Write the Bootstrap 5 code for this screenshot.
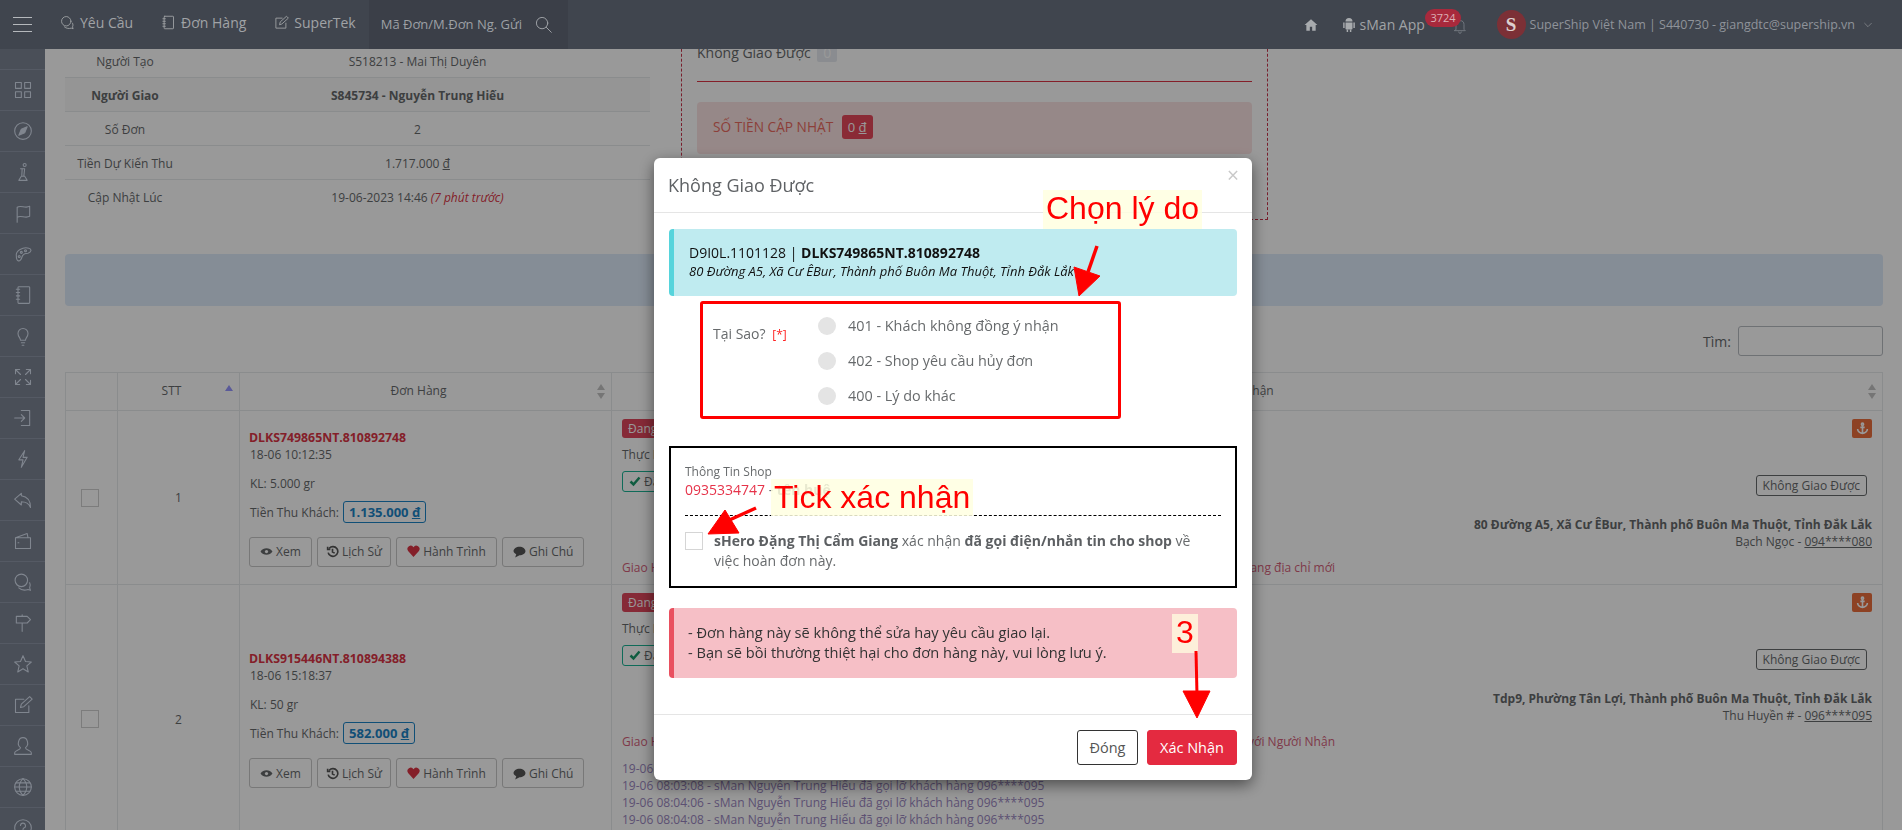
<!DOCTYPE html>
<html lang="vi">
  <head>
    <meta charset="UTF-8" />
    <meta name="viewport" content="width=device-width, initial-scale=1.0" />
    <title>Không Giao Được</title>
    <link href="https://cdn.jsdelivr.net/npm/bootstrap@5.3.0/dist/css/bootstrap.min.css" rel="stylesheet" />
    <style>
      html, body { height: 830px; overflow: hidden; }
      body { font-family: "Open Sans", sans-serif; font-size: 12px; line-height: 17px; color: #676a6c; background: #fff; }

      /* top bar */
      .top-bar { position: relative; z-index: 1060; height: 49px; background: #40454e; color: #a0a3a6; font-size: 14px; }
      .top-bar svg { fill: none; stroke: currentColor; stroke-width: 1.4; stroke-linecap: round; stroke-linejoin: round; }
      .burger { width: 19px; margin: 0 28px 0 13px; }
      .burger i { display: block; height: 1px; background: #b5b8bc; margin: 6px 0; }
      .top-link { display: flex; align-items: center; gap: 5px; margin-right: 28px; margin-top: -5px; }
      .top-search { width: 199px; height: 49px; background: #3b3f48; margin-left: -15px; padding: 0 16px 0 12px; color: #9da0a5; font-size: 13px; }
      .user-text { font-size: 12.5px; color: #8f939a; }
      .note-badge { position: absolute; left: 1425px; top: 9px; width: 36px; height: 18px; line-height: 18px; border-radius: 9px; background: #a8293c; color: #dcb0b6; font-size: 11px; text-align: center; }
      .ava { width: 29px; height: 29px; border-radius: 50%; background: #7c3036; color: #ddd0d0; font-family: "Liberation Serif", serif; font-size: 19px; font-weight: bold; }

      /* left rail */
      .side-rail { position: fixed; z-index: 1060; left: 0; top: 49px; bottom: 0; width: 45px; background: #4a4f58; padding-top: 20px; color: #80868f; }
      .side-item { height: 41px; border-top: 1px solid #555a64; }
      .side-item svg { width: 20px; height: 20px; fill: none; stroke: currentColor; stroke-width: 1.3; stroke-linecap: round; stroke-linejoin: round; }

      /* content behind the dialog */
      .main-wrap { margin: -15px 19px 0 65px; }
      .info-table { width: 585px; margin-top: 10px; }
      .info-table td { padding: 9px 8px 7px; text-align: center; border-bottom: 1px solid #e7eaec; line-height: 17px; }
      .info-table td:first-child { width: 120px; }
      .info-table tr.strong td { font-weight: 700; background: #f9f9f9; }
      .ago { color: #dc3545; font-style: italic; }
      .dash-box { width: 587px; height: 186px; margin-left: 31px; border: 1px dashed #c8324a; border-top: 0; padding: 9px 15px 0 15px; font-size: 14px; line-height: 20px; }
      .zero-tag { display: inline-block; background: #e6eaf0; color: #fff; padding: 0 6px; border-radius: 2px; font-size: 14px; line-height: 18px; margin-left: 3px; }
      .red-line { height: 1px; background: #dc3545; margin-top: 18px; margin-bottom: 20px; }
      .pink-box { height: 52px; background: #fbe3e3; border-radius: 4px; padding: 16px 16px; color: #ea6a60; font-size: 13.7px; line-height: 17px; }
      .money-tag { background: #e6485a; color: #fff; border-radius: 3px; padding: 3px 6px; font-size: 13px; margin-left: 5px; }
      .blue-strip { height: 52px; margin-top: 34px; background: #deebfa; border-radius: 4px; }
      .find-row { margin-top: 20px; height: 30px; font-size: 14px; }
      .find-box { width: 145px; height: 30px; border: 1px solid #b8bcc2; border-radius: 3px; margin-left: 7px; }

      .order-table { table-layout: fixed; width: 1818px; margin: 16px 0 0; --bs-table-bg: transparent; --bs-table-color: #676a6c; --bs-border-color: #e7eaec; }
      .order-table th { position: relative; height: 38px; padding: 0 14px 2px 0; text-align: center; vertical-align: middle; font-weight: 400; }
      .order-table td { padding: 8px 10px; vertical-align: middle; }
      .sort-mark { position: absolute; right: 6px; top: 11px; width: 8px; height: 15px; }
      .tick-box { width: 18px; height: 18px; border: 1px solid #cfcfcf; display: block; margin: 0 auto 0 5px; }
      .code-link { color: #dc3545; font-weight: 700; font-size: 12.3px; margin-left: -1px; }
      .cod-tag { border: 1px solid #1c84c6; border-radius: 3px; padding: 1px 5px; color: #1c84c6; font-weight: 700; font-size: 13px; margin-left: 1px; }
      .act-btn { --bs-btn-padding-x: 10px; --bs-btn-padding-y: 0; --bs-btn-font-size: 12px; --bs-btn-color: #676a6c; --bs-btn-border-color: #c8c8c8; --bs-btn-border-radius: 3px; height: 30px; line-height: 27px; margin-right: 5px; white-space: nowrap; }
      .act-btn.act-short { --bs-btn-padding-x: 8px; }
      .act-btn svg { width: 13px; height: 13px; vertical-align: -2px; }
      .act-row { margin-left: -1px; }
      .state-tag { display: inline-block; height: 19px; padding: 0 6px; line-height: 19px; background: #e0465c; color: #fff; border-radius: 3px; }
      .ok-tag { display: inline-block; height: 21px; padding: 0 6px; line-height: 19px; border: 1px solid #1ab394; border-radius: 3px; }
      .ok-tag svg { vertical-align: -1px; }
      .anchor-tag { display: inline-flex; align-items: center; justify-content: center; width: 20px; height: 19px; background: #ec6f3c; border-radius: 2px; }
      .fail-tag { display: inline-block; height: 21px; padding: 0 6px; line-height: 19px; border: 1px solid #676a6c; border-radius: 3px; margin-right: 5px; }
      .rose-text { color: #d4607a; }
      .log-text { color: #9a86c0; margin-top: 10px; }

      /* dialog */
      .modal-backdrop.show { opacity: .4; }
      .modal { --bs-modal-width: 598px; }
      .modal-dialog.fail-dialog { margin: 158px 0 0 654px; }
      .fail-dialog .modal-content { height: 622px; color: #676a6c; border: 0; border-radius: 6px; box-shadow: 0 5px 15px rgba(0,0,0,.5); font-size: 14px; line-height: 20px; }
      .fail-dialog .modal-header { height: 55px; padding: 0 14px; border-bottom: 1px solid #e5e5e5; }
      .fail-dialog .modal-title { font-size: 18px; line-height: 25px; font-weight: 400; color: #5f6265; }
      .close-x { position: absolute; right: 13px; top: 7px; color: #c9c9c9; font-size: 21px; }
      .fail-dialog .modal-body { padding: 16px 15px 0; }
      .note-info { height: 67px; background: #bfebf0; border-left: 5px solid #56d4dc; border-radius: 4px; padding: 15px 15px; color: #111; font-size: 13px; line-height: 18px; }
      .note-info .first-line { font-size: 14px; }
      .why-box { width: 421px; height: 118px; margin: 5px 0 0 31px; border: 3px solid #f00; border-radius: 3px; padding: 0 10px; font-size: 14px; }
      .why-label { width: 105px; padding-top: 20px; }
      .req-mark { color: #f22; font-size: 12px; margin-left: 3px; }
      .why-opts { padding-top: 4px; font-size: 14.4px; }
      .why-opts .form-check { display: flex; align-items: center; height: 35px; padding: 0; margin: 0; gap: 12px; }
      .why-opts .form-check-input { width: 18px; height: 18px; margin: 0; float: none; background-color: #e4e4e4; border: 0; }
      .shop-box { height: 142px; margin-top: 27px; border: 2px solid #000; padding: 15px 14px 0; }
      .shop-title { font-size: 12px; line-height: 18px; }
      .shop-phone { font-size: 14px; color: #e6334a; line-height: 18px; }
      .dash-line { border-top: 1px dashed #000; margin: 16px 0 0; }
      .confirm-row { display: flex; gap: 11px; margin-top: 16px; font-size: 14px; line-height: 20px; }
      .confirm-row label { max-width: 490px; margin-top: -1px; }
      .confirm-row .form-check-input { flex: 0 0 18px; width: 18px; height: 18px; margin: 0; border-radius: 0; border-color: #d5d5d5; }
      .confirm-row b { color: #5c5f62; }
      .note-red { height: 70px; margin-top: 20px; background: #f6bfc6; border-left: 5px solid #e9505f; border-radius: 4px; padding: 14px 14px; color: #333; font-size: 14.6px; line-height: 20px; }
      .fail-dialog .modal-footer { position: absolute; left: 0; right: 0; top: 556px; height: 66px; padding: 0 15px; border-top: 1px solid #e5e5e5; gap: 9px; }
      .fail-dialog .modal-footer .btn { height: 35px; margin: 0; padding: 0; font-size: 14.5px; border-radius: 3px; }
      .btn-shut { width: 61px; --bs-btn-color: #555; --bs-btn-border-color: #333; --bs-btn-bg: #fff; }
      .btn-ok { width: 90px; --bs-btn-color: #fff; --bs-btn-bg: #e42a40; --bs-btn-border-color: #e42a40; }

      /* tutorial marks drawn over the capture */
      .hint-text { position: absolute; z-index: 1070; height: 39px; padding: 0 3px; background: rgba(255,255,224,.85); color: #f00; font-family: "Liberation Sans", sans-serif; font-size: 32px; line-height: 36px; white-space: nowrap; }
      .hint-one { left: 1043px; top: 190px; }
      .hint-two { left: 771px; top: 479px; height: 37px; }
      .hint-three { left: 1172px; top: 614px; background: rgba(255,255,224,.75); padding: 0 4px; }
      .hint-arrows { position: fixed; z-index: 1070; left: 0; top: 0; width: 1902px; height: 830px; pointer-events: none; }
    </style>
  </head>
  <body class="modal-open">
    <header class="top-bar d-flex align-items-center">
      <div class="burger"><i></i><i></i><i></i></div>
      <div class="top-link">
        <svg width="15" height="15" viewBox="0 0 24 24"><circle cx="10" cy="10" r="7.5" /><path d="M7 19c3 3 8 3 11 2l3 1-1-3c1-2 1-4 0-6" /></svg>Yêu Cầu
      </div>
      <div class="top-link">
        <svg width="15" height="15" viewBox="0 0 24 24"><rect x="5" y="2" width="15" height="20" rx="1" /><path d="M3 6h4M3 10h4M3 14h4M3 18h4" /></svg>Đơn Hàng
      </div>
      <div class="top-link">
        <svg width="15" height="15" viewBox="0 0 24 24"><path d="M19 13v8H3V5h10" /><path d="M9 15l1-4L20 2l3 3-10 9z" /></svg>SuperTek
      </div>
      <div class="top-search d-flex align-items-center justify-content-between">
        <span>Mã Đơn/M.Đơn Ng. Gửi</span>
        <svg width="17" height="17" viewBox="0 0 24 24"><circle cx="10" cy="10" r="8" /><path d="M16 16l7 7" /></svg>
      </div>
      <div class="ms-auto d-flex align-items-center">
        <svg width="14" height="14" viewBox="0 0 24 24" style="fill:#a8abae;stroke:none"><path d="M12 2L1 12h3v10h6v-7h4v7h6V12h3z" /></svg>
        <svg class="ms-4" width="14" height="17" viewBox="0 0 24 28" style="fill:#a8abae;stroke:none"><path d="M6 9a6 6 0 0112 0zM6 10.500h12V21a1.500 1.500 0 01-1.500 1.500h-9A1.500 1.500 0 016 21zM2 10.500h2.500V20H2zM19.500 10.500H22V20h-2.500zM8 23h2.500v4H8zM13.500 23H16v4h-2.500z" /></svg>
        <span class="ms-1" style="width:92px">sMan App</span>
        <span class="note-badge">3724</span>
        <svg width="16" height="18" viewBox="0 0 24 24" style="margin-top:3px;color:#747a81"><path d="M6 17V10a6 6 0 0112 0v7l2 2H4zM10 21a2 2 0 004 0" /></svg>
        <span class="ava d-flex align-items-center justify-content-center" style="margin-left:29px">S</span>
        <span class="user-text" style="margin-left:4px">SuperShip Việt Nam | S440730 - giangdtc@supership.vn</span>
        <svg class="ms-2" width="10" height="10" viewBox="0 0 24 24" style="margin-right:29px"><path d="M4 8l8 8 8-8" /></svg>
      </div>
    </header>

    <nav class="side-rail">
      <div class="side-item d-flex align-items-center justify-content-center"><svg viewBox="0 0 24 24"><rect x="3" y="3" width="7" height="7" /><rect x="14" y="3" width="7" height="7" /><rect x="3" y="14" width="7" height="7" /><rect x="14" y="14" width="7" height="7" /></svg></div>
      <div class="side-item d-flex align-items-center justify-content-center"><svg viewBox="0 0 24 24"><circle cx="12" cy="12" r="10" /><path d="M17 7l-3 7-7 3 3-7z" fill="currentColor" /></svg></div>
      <div class="side-item d-flex align-items-center justify-content-center"><svg viewBox="0 0 24 24"><circle cx="14" cy="3.500" r="1.800" /><path d="M9 8h5l-1 9M11 8l-.500 9M7 22l3-5h4l3 5z" /></svg></div>
      <div class="side-item d-flex align-items-center justify-content-center"><svg viewBox="0 0 24 24"><path d="M5 23V5c5-3 9 2 15-1v12c-6 3-10-2-15 1" /></svg></div>
      <div class="side-item d-flex align-items-center justify-content-center"><svg viewBox="0 0 24 24"><path d="M4 14c-1-6 8-11 15-9 4 1 3 5-1 6-4 0-6 1-7 4-1 4-3 6-5 5s-2-3-2-6z" /><circle cx="10" cy="10" r="1.200" /><circle cx="15" cy="8" r="1.200" /><circle cx="7.500" cy="15" r="1.200" /></svg></div>
      <div class="side-item d-flex align-items-center justify-content-center"><svg viewBox="0 0 24 24"><rect x="6" y="2" width="14" height="20" rx="1" /><path d="M4 5h4M4 9h4M4 13h4M4 17h4" /></svg></div>
      <div class="side-item d-flex align-items-center justify-content-center"><svg viewBox="0 0 24 24"><path d="M9 17c0-3-3-4-3-8a6 6 0 0112 0c0 4-3 5-3 8zM10 20h4M11 23h2" /></svg></div>
      <div class="side-item d-flex align-items-center justify-content-center"><svg viewBox="0 0 24 24"><path d="M3 8V3h5M3 3l6 6M21 8V3h-5M21 3l-6 6M3 16v5h5M3 21l6-6M21 16v5h-5M21 21l-6-6" /></svg></div>
      <div class="side-item d-flex align-items-center justify-content-center"><svg viewBox="0 0 24 24"><path d="M10 3h10v18H10M2 12h12M10 8l4 4-4 4" /></svg></div>
      <div class="side-item d-flex align-items-center justify-content-center"><svg viewBox="0 0 24 24"><path d="M14 2L7 13h5l-2 9 7-12h-5z" /></svg></div>
      <div class="side-item d-flex align-items-center justify-content-center"><svg viewBox="0 0 24 24"><path d="M10 4l-8 7 8 7v-4c5 0 9 2 11 7 0-8-4-13-11-14z" /></svg></div>
      <div class="side-item d-flex align-items-center justify-content-center"><svg viewBox="0 0 24 24"><path d="M3 8l14-5 1 5M3 8h18v13H3zM6 14h1" /></svg></div>
      <div class="side-item d-flex align-items-center justify-content-center"><svg viewBox="0 0 24 24"><circle cx="10" cy="10" r="7.5" /><path d="M7 19c3 3 8 3 11 2l3 1-1-3c1-2 1-4 0-6" /></svg></div>
      <div class="side-item d-flex align-items-center justify-content-center"><svg viewBox="0 0 24 24"><path d="M4 4h13l4 4-4 4H4zM11 12v10M11 2v2" /></svg></div>
      <div class="side-item d-flex align-items-center justify-content-center"><svg viewBox="0 0 24 24"><path d="M12 2l3 7 7 .6-5.400 4.700 1.700 7.200L12 17.600 5.700 21.500l1.700-7.200L2 9.600 9 9z" /></svg></div>
      <div class="side-item d-flex align-items-center justify-content-center"><svg viewBox="0 0 24 24"><path d="M19 13v8H3V5h10" /><path d="M9 15l1-4L20 2l3 3-10 9z" /></svg></div>
      <div class="side-item d-flex align-items-center justify-content-center"><svg viewBox="0 0 24 24"><path d="M12 2a5.500 6.500 0 00-3 12c0 3-7 3-7 6v2h20v-2c0-3-7-3-7-6a5.500 6.500 0 00-3-12z" /></svg></div>
      <div class="side-item d-flex align-items-center justify-content-center"><svg viewBox="0 0 24 24"><circle cx="12" cy="12" r="10" /><path d="M2 12h20M3.500 7h17M3.500 17h17M12 2c-6 6-6 14 0 20M12 2c6 6 6 14 0 20" /></svg></div>
      <div class="side-item d-flex align-items-center justify-content-center"><svg viewBox="0 0 24 24"><circle cx="12" cy="12" r="10" /><path d="M9 9a3 3 0 114 3c-1 .5-1 1-1 2M12 17v1" /></svg></div>
    </nav>

    <main class="main-wrap">
      <div class="d-flex align-items-start">
        <table class="info-table">
          <tr><td>Người Tạo</td><td>S518213 - Mai Thị Duyên</td></tr>
          <tr class="strong"><td>Người Giao</td><td>S845734 - Nguyễn Trung Hiếu</td></tr>
          <tr><td>Số Đơn</td><td>2</td></tr>
          <tr><td>Tiền Dự Kiến Thu</td><td>1.717.000 <u>đ</u></td></tr>
          <tr><td class="border-0">Cập Nhật Lúc</td><td class="border-0">19-06-2023 14:46 <span class="ago">(7 phút trước)</span></td></tr>
        </table>
        <div class="dash-box">
          <div>Không Giao Được <span class="zero-tag">0</span></div>
          <div class="red-line"></div>
          <div class="pink-box">SỐ TIỀN CẬP NHẬT <span class="money-tag">0 <u>đ</u></span></div>
        </div>
      </div>

      <div class="blue-strip"></div>

      <div class="find-row d-flex justify-content-end align-items-center">Tìm: <span class="find-box"></span></div>

      <table class="table table-bordered order-table">
        <colgroup><col style="width: 52px" /><col style="width: 122px" /><col style="width: 372px" /><col /></colgroup>
        <thead>
          <tr>
            <th></th>
            <th>STT<svg class="sort-mark" viewBox="0 0 8 15"><path d="M4 1l4 6H0z" fill="#9696ff" /></svg></th>
            <th>Đơn Hàng<svg class="sort-mark" viewBox="0 0 8 15"><path d="M4 0l4 6H0zM4 15l4-6H0z" fill="#c4c4c4" /></svg></th>
            <th>Người Nhận<svg class="sort-mark" viewBox="0 0 8 15"><path d="M4 0l4 6H0zM4 15l4-6H0z" fill="#c4c4c4" /></svg></th>
          </tr>
        </thead>
        <tbody>
          <tr>
            <td><span class="tick-box"></span></td>
            <td class="text-center">1</td>
            <td>
              <div class="code-link">DLKS749865NT.810892748</div>
              <div>18-06 10:12:35</div>
              <div class="mt-2 pt-1">KL: 5.000 gr</div>
              <div class="mt-2 pt-1">Tiền Thu Khách: <span class="cod-tag">1.135.000 <u>đ</u></span></div>
              <div class="d-flex mt-3 act-row">
                <button class="btn act-btn"><svg viewBox="0 0 24 24"><path d="M1 12c5-8 17-8 22 0-5 8-17 8-22 0z" fill="#676a6c" /><circle cx="12" cy="12" r="3" fill="#fff" /></svg> Xem</button>
                <button class="btn act-btn act-short"><svg viewBox="0 0 24 24" fill="none" stroke="#555" stroke-width="3"><path d="M6 6a9 9 0 11-2 8M3 3v5h5M12 7v6l4 2" /></svg> Lịch Sử</button>
                <button class="btn act-btn"><svg viewBox="0 0 24 24"><path d="M12 22L2 11a6 6 0 0110-7 6 6 0 0110 7z" fill="#dc3545" /></svg> Hành Trình</button>
                <button class="btn act-btn"><svg viewBox="0 0 24 24"><path d="M12 3c6 0 11 3.500 11 8s-5 8-11 8l-8 4 2-6c-3-1.500-5-3.500-5-6 0-4.500 5-8 11-8z" fill="#555" /></svg> Ghi Chú</button>
              </div>
            </td>
            <td>
              <div class="d-flex justify-content-between">
                <div>
                  <span class="state-tag">Đang Giao Hàng</span>
                  <div class="mt-2">Thực Hiện</div>
                  <span class="ok-tag mt-2"><svg width="12" height="12" viewBox="0 0 24 24" fill="none" stroke="#1a9a6c" stroke-width="5"><path d="M3 13l6 6L21 5" /></svg> Đã Gọi</span>
                </div>
                <div class="text-end">
                  <span class="anchor-tag"><svg width="13" height="13" viewBox="0 0 24 24" fill="none" stroke="#fff" stroke-width="3"><circle cx="12" cy="4" r="2" /><path d="M12 7v15M3 13c0 5 5 8 9 8s9-3 9-8M8 10h8" /></svg></span>
                  <div style="margin-top: 36px"><span class="fail-tag">Không Giao Được</span></div>
                  <div class="fw-bold" style="margin-top: 20px">80 Đường A5, Xã Cư ÊBur, Thành phố Buôn Ma Thuột, Tỉnh Đắk Lắk</div>
                  <div>Bạch Ngọc - <u>094****080</u></div>
                </div>
              </div>
              <div class="d-flex justify-content-between rose-text" style="width: 713px; margin-top: 9px"><span>Giao Hàng</span><span>Khách chuyển sang địa chỉ mới</span></div>
            </td>
          </tr>
          <tr>
            <td><span class="tick-box"></span></td>
            <td class="text-center">2</td>
            <td>
              <div class="code-link">DLKS915446NT.810894388</div>
              <div>18-06 15:18:37</div>
              <div class="mt-2 pt-1">KL: 50 gr</div>
              <div class="mt-2 pt-1">Tiền Thu Khách: <span class="cod-tag">582.000 <u>đ</u></span></div>
              <div class="d-flex mt-3 act-row">
                <button class="btn act-btn"><svg viewBox="0 0 24 24"><path d="M1 12c5-8 17-8 22 0-5 8-17 8-22 0z" fill="#676a6c" /><circle cx="12" cy="12" r="3" fill="#fff" /></svg> Xem</button>
                <button class="btn act-btn act-short"><svg viewBox="0 0 24 24" fill="none" stroke="#555" stroke-width="3"><path d="M6 6a9 9 0 11-2 8M3 3v5h5M12 7v6l4 2" /></svg> Lịch Sử</button>
                <button class="btn act-btn"><svg viewBox="0 0 24 24"><path d="M12 22L2 11a6 6 0 0110-7 6 6 0 0110 7z" fill="#dc3545" /></svg> Hành Trình</button>
                <button class="btn act-btn"><svg viewBox="0 0 24 24"><path d="M12 3c6 0 11 3.500 11 8s-5 8-11 8l-8 4 2-6c-3-1.500-5-3.500-5-6 0-4.500 5-8 11-8z" fill="#555" /></svg> Ghi Chú</button>
              </div>
            </td>
            <td>
              <div class="d-flex justify-content-between">
                <div>
                  <span class="state-tag">Đang Giao Hàng</span>
                  <div class="mt-2">Thực Hiện</div>
                  <span class="ok-tag mt-2"><svg width="12" height="12" viewBox="0 0 24 24" fill="none" stroke="#1a9a6c" stroke-width="5"><path d="M3 13l6 6L21 5" /></svg> Đã Gọi</span>
                </div>
                <div class="text-end">
                  <span class="anchor-tag"><svg width="13" height="13" viewBox="0 0 24 24" fill="none" stroke="#fff" stroke-width="3"><circle cx="12" cy="4" r="2" /><path d="M12 7v15M3 13c0 5 5 8 9 8s9-3 9-8M8 10h8" /></svg></span>
                  <div style="margin-top: 36px"><span class="fail-tag">Không Giao Được</span></div>
                  <div class="fw-bold" style="margin-top: 20px">Tdp9, Phường Tân Lợi, Thành phố Buôn Ma Thuột, Tỉnh Đắk Lắk</div>
                  <div>Thu Huyền # - <u>096****095</u></div>
                </div>
              </div>
              <div class="d-flex justify-content-between rose-text" style="width: 713px; margin-top: 9px"><span>Giao Hàng</span><span>Không liên lạc được với Người Nhận</span></div>
              <div class="log-text">
                <div>19-06 08:02:40 - sMan Nguyễn Trung Hiếu đã gọi lỡ khách hàng 096****095</div>
                <div>19-06 08:03:08 - sMan Nguyễn Trung Hiếu đã gọi lỡ khách hàng 096****095</div>
                <div>19-06 08:04:06 - sMan Nguyễn Trung Hiếu đã gọi lỡ khách hàng 096****095</div>
                <div>19-06 08:04:08 - sMan Nguyễn Trung Hiếu đã gọi lỡ khách hàng 096****095</div>
                <div>19-06 08:04:10 - sMan Nguyễn Trung Hiếu đã gọi lỡ khách hàng 096****095</div>
              </div>
            </td>
          </tr>
        </tbody>
      </table>
    </main>

    <div class="modal-backdrop show"></div>
    <div class="modal show d-block" tabindex="-1">
      <div class="modal-dialog fail-dialog">
        <div class="modal-content">
          <div class="modal-header">
            <h5 class="modal-title">Không Giao Được</h5>
            <span class="close-x">×</span>
          </div>
          <div class="modal-body">
            <div class="note-info">
              <div class="first-line">D9I0L.1101128 | <b>DLKS749865NT.810892748</b></div>
              <div class="fst-italic">80 Đường A5, Xã Cư ÊBur, Thành phố Buôn Ma Thuột, Tỉnh Đắk Lắk</div>
            </div>
            <div class="why-box d-flex">
              <div class="why-label">Tại Sao? <span class="req-mark">[*]</span></div>
              <div class="why-opts">
                <div class="form-check"><input class="form-check-input" type="radio" name="reason" id="r401" /><label for="r401">401 - Khách không đồng ý nhận</label></div>
                <div class="form-check"><input class="form-check-input" type="radio" name="reason" id="r402" /><label for="r402">402 - Shop yêu cầu hủy đơn</label></div>
                <div class="form-check"><input class="form-check-input" type="radio" name="reason" id="r400" /><label for="r400">400 - Lý do khác</label></div>
              </div>
            </div>
            <div class="shop-box">
              <div class="shop-title">Thông Tin Shop</div>
              <div class="shop-phone">0935334747 <span style="color:#676a6c">- <b>tên huệ</b></span></div>
              <div class="dash-line"></div>
              <div class="confirm-row">
                <input class="form-check-input" type="checkbox" id="confirmCall" />
                <label for="confirmCall"><b>sHero Đặng Thị Cẩm Giang</b> xác nhận <b>đã gọi điện/nhắn tin cho shop</b> về việc hoàn đơn này.</label>
              </div>
            </div>
            <div class="note-red">
              - Đơn hàng này sẽ không thể sửa hay yêu cầu giao lại.<br />
              - Bạn sẽ bồi thường thiệt hại cho đơn hàng này, vui lòng lưu ý.
            </div>
          </div>
          <div class="modal-footer">
            <button type="button" class="btn btn-shut">Đóng</button>
            <button type="button" class="btn btn-ok">Xác Nhận</button>
          </div>
        </div>
      </div>
    </div>

    <div class="hint-text hint-one">Chọn lý do</div>
    <div class="hint-text hint-two">Tick xác nhận</div>
    <div class="hint-text hint-three">3</div>
    <svg class="hint-arrows" viewBox="0 0 1902 830" fill="#f00" stroke="#f00">
      <path d="M1097 246L1088 272" stroke-width="3.5" />
      <path d="M1079 296L1074 267 1100 276z" />
      <path d="M756 508L725 522" stroke-width="3.5" />
      <path d="M708 534L725 510 739 533z" />
      <path d="M1196 651L1197 695" stroke-width="3" />
      <path d="M1197 718L1183 691H1210z" />
    </svg>
    <script src="https://cdn.jsdelivr.net/npm/bootstrap@5.3.0/dist/js/bootstrap.bundle.min.js"></script>
  </body>
</html>
